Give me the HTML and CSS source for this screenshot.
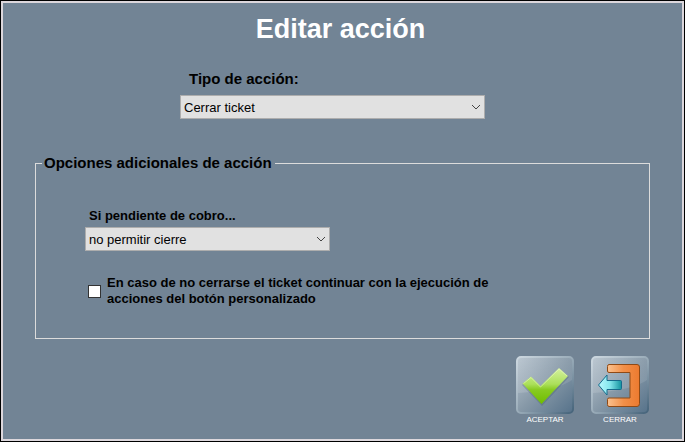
FILE: index.html
```html
<!DOCTYPE html>
<html lang="es">
<head>
<meta charset="UTF-8" />
<meta name="viewport" content="width=device-width, initial-scale=1" />
<title>Editar acción</title>
<link rel="stylesheet" href="styles.css">
</head>
<body>
<form class="dialog">
  <h1>Editar acción</h1>

  <div class="top">
    <div class="field tipo">
      <label for="tipoAccion">Tipo de acción:</label>
      <div class="combo">
        <select id="tipoAccion">
          <option>Cerrar ticket</option>
        </select>
        <svg class="chevron" viewBox="0 0 10 6"><path d="M1 1l4 4 4-4" /></svg>
      </div>
    </div>
  </div>

  <fieldset class="options">
    <legend>Opciones adicionales de acción</legend>
    <div class="field pendiente">
      <label for="pendiente">Si pendiente de cobro...</label>
      <div class="combo">
        <select id="pendiente">
          <option>no permitir cierre</option>
        </select>
        <svg class="chevron" viewBox="0 0 10 6"><path d="M1 1l4 4 4-4" /></svg>
      </div>
    </div>
    <div class="check">
      <input type="checkbox" id="continuar">
      <label for="continuar">En caso de no cerrarse el ticket continuar con la ejecución de acciones del botón personalizado</label>
    </div>
  </fieldset>

  <div class="actions">
    <button type="button">
      <svg viewBox="0 0 58 58">
        <defs>
          <linearGradient id="tile" x1="0" y1="0" x2="1" y2="1">
            <stop offset="0" stop-color="#bac6d0" />
            <stop offset=".5" stop-color="#8799a8" />
            <stop offset="1" stop-color="#56728a" />
          </linearGradient>
          <linearGradient id="edge" x1="0" y1="0" x2="1" y2="1">
            <stop offset="0" stop-color="#cdd8e0" />
            <stop offset=".5" stop-color="#9aacb9" />
            <stop offset="1" stop-color="#45637a" />
          </linearGradient>
          <linearGradient id="gloss" x1="0" y1="0" x2="0" y2="1">
            <stop offset="0" stop-color="#fff" stop-opacity=".04" />
            <stop offset="1" stop-color="#fff" stop-opacity=".14" />
          </linearGradient>
          <linearGradient id="green" x1="0" y1="0" x2="0" y2="1">
            <stop offset="0" stop-color="#d6f2a0" />
            <stop offset=".45" stop-color="#abdf5a" />
            <stop offset=".6" stop-color="#88cb22" />
            <stop offset="1" stop-color="#6fbd00" />
          </linearGradient>
        </defs>
        <rect x="1" y="1" width="56" height="56" rx="4" fill="url(#tile)" stroke="url(#edge)" stroke-width="2" />
        <path d="M2 5q0-3 3-3h48q3 0 3 3v19Q42 34 2 37z" fill="url(#gloss)" />
        <path d="M6 29l9-8 10 10 18-18 10 8-27 29z" fill="#2f4a5c" opacity=".25" />
        <path d="M6.500 27.500l8.500-7 9.500 9.500 18.500-18 9 8-26.500 28z" fill="url(#green)" />
        <path d="M7.500 27.500l7.500-6 9.500 9.500 18.500-18 8 7" fill="none" stroke="#e6f8c3" opacity=".6" />
      </svg>
      <span>ACEPTAR</span>
    </button>
    <button type="button">
      <svg viewBox="0 0 58 58">
        <defs>
          <linearGradient id="orange" x1="0" y1="0" x2="1" y2="0">
            <stop offset="0" stop-color="#fbc28f" />
            <stop offset=".5" stop-color="#f29049" />
            <stop offset="1" stop-color="#ec7a2f" />
          </linearGradient>
          <linearGradient id="cyan" x1="0" y1="0" x2="1" y2="0">
            <stop offset="0" stop-color="#b9f9ff" />
            <stop offset=".5" stop-color="#83e6ec" />
            <stop offset="1" stop-color="#12939f" />
          </linearGradient>
        </defs>
        <rect x="1" y="1" width="56" height="56" rx="4" fill="url(#tile)" stroke="url(#edge)" stroke-width="2" />
        <path d="M2 5q0-3 3-3h48q3 0 3 3v19Q42 34 2 37z" fill="url(#gloss)" />
        <path d="M18 8.500h28q2.500 0 2.500 2.500v36.500q0 3-2.500 3H18q-1.500 0-1.500-2v-5q0-1.500 1.500-1.500h21V16.500H18q-1.500 0-1.500-1.500v-4.500q0-2 1.500-2z" fill="url(#orange)" stroke="#8f4a16" />
        <path d="M7.500 29l8.500-10v5.500h13.500q1 0 1 1v7q0 1-1 1H16v5.500z" fill="url(#cyan)" stroke="#176b8c" stroke-linejoin="round" />
      </svg>
      <span>CERRAR</span>
    </button>
  </div>
</form>
</body>
</html>
```
FILE: styles.css
```css
* { box-sizing: border-box; }

body {
  display: flex;
  flex-direction: column;
  min-height: 100vh;
  margin: 0;
  border: 1px solid #000;
  background: #728495;
  color: #000;
  font-family: "Liberation Sans", Arial, sans-serif;
  font-size: 13px;
  line-height: 16px;
}

.dialog {
  flex: 1;
  padding: 10px 32px 12px;
  border: 2px solid #dcd7dc;
}

h1 {
  margin: 0 0 25px;
  padding-right: 4px;
  color: #fff;
  font-size: 27px;
  line-height: 32px;
  text-align: center;
}

label,
legend {
  font-weight: bold;
}

.field {
  display: flex;
  flex-direction: column;
  gap: 3px;
}

.field label {
  padding-left: 4px;
}

.top {
  display: flex;
  justify-content: center;
  padding-right: 20px;
}

.tipo {
  flex: 0 1 305px;
  gap: 7px;
}

.tipo label {
  padding-left: 9px;
  font-size: 15px;
  line-height: 18px;
}

.combo {
  display: grid;
  align-items: center;
}

.combo > * {
  grid-area: 1 / 1;
}

select {
  appearance: none;
  width: 100%;
  height: 24px;
  margin: 0;
  padding: 1px 20px 0 3px;
  border: 1px solid #adadad;
  border-radius: 0;
  background: #e1e1e1;
  color: #000;
  font: inherit;
}

.chevron {
  justify-self: end;
  width: 10px;
  height: 6px;
  margin-right: 4px;
  fill: none;
  stroke: #444;
  pointer-events: none;
}

.options {
  min-width: 0;
  margin: 35px 0 17px;
  padding: 36px 49px 31px;
  border: 1px solid #dcdcdc;
}

.options legend {
  margin-left: -43px;
  padding: 0 3px 0 2px;
  font-size: 15px;
  line-height: 18px;
}

.pendiente {
  max-width: 245px;
}

.check {
  display: flex;
  align-items: center;
  gap: 6px;
  max-width: 430px;
  margin-top: 24px;
  padding-left: 3px;
}

.check input {
  appearance: none;
  flex: none;
  width: 13px;
  height: 13px;
  margin: 0;
  border: 1px solid #333;
  background: #fff;
}

.check input:checked {
  background: #333;
  box-shadow: inset 0 0 0 2px #fff;
}

.actions {
  display: flex;
  justify-content: flex-end;
  gap: 17px;
  padding-right: 1px;
}

.actions button {
  width: 58px;
  padding: 0;
  border: 0;
  background: none;
  color: #fff;
  font: inherit;
  font-size: 8px;
  line-height: 12px;
  cursor: pointer;
}

.actions svg {
  display: block;
  width: 58px;
  height: 58px;
}
```
